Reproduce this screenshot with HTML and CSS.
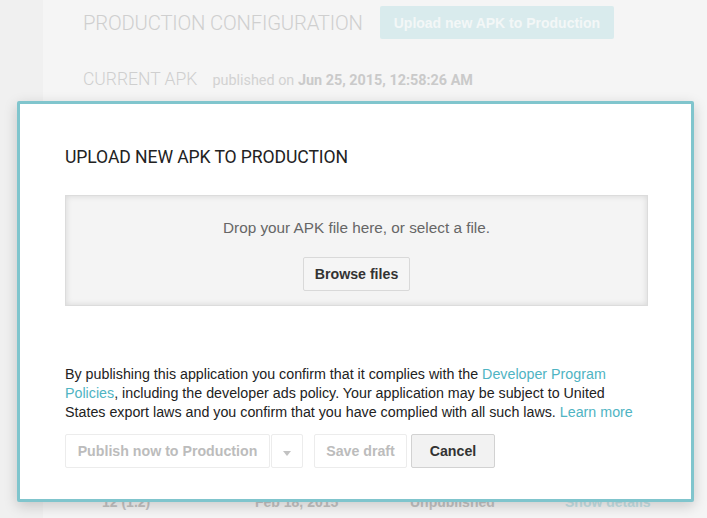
FILE: index.html
```html
<!DOCTYPE html>
<html lang="en">
<head>
    <meta charset="UTF-8">
    <title>Upload new APK</title>
    <link rel="stylesheet" href="styles.css">
</head>
<body>
    <div class="page">
        <div class="panel">
            <div class="config-head">
                <h1 class="config-title">PRODUCTION CONFIGURATION</h1>
                <button class="btn-upload">Upload new APK to Production</button>
            </div>
            <div class="current">
                <span class="current-title">CURRENT APK</span>
                <span class="current-meta">published on <b>Jun 25, 2015, 12:58:26 AM</b></span>
            </div>
            <div class="spacer"></div>
            <div class="apk-row">
                <span class="c1">12 (1.2)</span>
                <span class="c2">Feb 18, 2015</span>
                <span class="c3">Unpublished</span>
                <span class="c4">Show details</span>
            </div>
        </div>
    </div>

    <!-- dialog sits over the page -->
    <div class="dialog">
        <h2 class="dialog-title">UPLOAD NEW APK TO PRODUCTION</h2>
        <div class="dropzone">
            <p class="drop-text">Drop your APK file here, or select a file.</p>
            <button class="btn">Browse files</button>
        </div>
        <p class="terms">By publishing this application you confirm that it complies with the <a href="#">Developer Program Policies</a>, including the developer ads policy. Your application may be subject to United States export laws and you confirm that you have complied with all such laws. <a href="#">Learn more</a></p>
        <div class="actions">
            <button class="btn btn-off btn-publish">Publish now to Production</button>
            <button class="btn btn-off btn-drop"><span class="caret"></span></button>
            <button class="btn btn-off btn-draft">Save draft</button>
            <button class="btn btn-cancel">Cancel</button>
        </div>
    </div>
</body>
</html>
```

FILE: styles.css
```css
html, body {
    margin: 0;
    padding: 0;
}
body {
    width: 707px;
    height: 518px;
    overflow: hidden;
    background: #f0f0f0;
    font-family: "Liberation Sans", Arial, sans-serif;
    position: relative;
}
button {
    font-family: "Liberation Sans", Arial, sans-serif;
}

/*背景页面*/
.page {
    display: flex;
    height: 518px;
}
.panel {
    margin-left: 43px;
    flex: 1;
    background: #f5f5f5;
    padding-left: 40px;
    display: flex;
    flex-direction: column;
}
.config-head {
    display: flex;
    align-items: center;
    height: 33px;
    margin-top: 6px;
}
.config-title {
    margin: 0;
    font-family: Roboto, sans-serif;
    font-weight: 300;
    font-size: 20.3px;
    color: #cfcfcf;
    letter-spacing: -0.2px;
}
.btn-upload {
    margin-left: 17px;
    height: 33px;
    padding: 0 14px;
    border: 0;
    border-radius: 2px;
    background: #d9ebed;
    color: #f3f7f7;
    font-weight: bold;
    font-size: 14px;
}
.current {
    margin-top: 30px;
    display: flex;
    align-items: baseline;
}
.current-title {
    font-family: Roboto, sans-serif;
    font-weight: 300;
    font-size: 17.5px;
    color: #cfcfcf;
}
.current-meta {
    margin-left: 15px;
    font-family: Roboto, sans-serif;
    font-size: 14.4px;
    color: #d2d2d2;
}
.current-meta b {
    color: #cacaca;
}
.spacer {
    flex: 1;
}
.apk-row {
    display: flex;
    height: 24px;
    padding-left: 19px;
    font-size: 14px;
    font-weight: bold;
    color: #c4c4c4;
}
.apk-row span {
    display: block;
}
.c1 { width: 153px; }
.c2 { width: 155px; }
.c3 { width: 155px; }
.c4 { color: #c6e2e6; }

/*对话框*/
.dialog {
    position: absolute;
    left: 17px;
    top: 101px;
    width: 677px;
    height: 401px;
    box-sizing: border-box;
    background: #fff;
    border: 3px solid #80c5cd;
    border-radius: 2px;
    box-shadow: 0 4px 14px rgba(0, 0, 0, 0.18);
    padding: 0 43px 0 45px;
}
.dialog-title {
    margin: 43px 0 0;
    font-family: Roboto, sans-serif;
    font-weight: 400;
    font-size: 17.6px;
    line-height: 20px;
    letter-spacing: -0.1px;
    color: #222;
}
.dropzone {
    margin-top: 28px;
    height: 111px;
    box-sizing: border-box;
    background: #f4f4f4;
    border: 1px solid #dcdcdc;
    box-shadow: inset 0 0 6px rgba(0, 0, 0, 0.12);
    text-align: center;
    padding-top: 23px;
}
.drop-text {
    margin: 0 0 20px;
    font-size: 15.3px;
    line-height: 18px;
    color: #666;
}
.btn {
    height: 34px;
    box-sizing: border-box;
    padding: 0 11px;
    background: #f5f5f5;
    border: 1px solid #d9d9d9;
    border-radius: 2px;
    font-size: 14.2px;
    font-weight: bold;
    color: #333;
}
.terms {
    margin: 59px 0 0;
    font-size: 14.27px;
    line-height: 19px;
    color: #222;
}
.terms a {
    color: #4fb4c3;
    text-decoration: none;
}
.actions {
    margin-top: 12px;
    display: flex;
}
.btn-off {
    background: #fff;
    border-color: #ececec;
    color: #bcbcbc;
}
.btn-publish {
    width: 205px;
}
.btn-drop {
    width: 32px;
    margin-left: 1px;
}
.caret {
    display: inline-block;
    margin-top: 5px;
    border-left: 4px solid transparent;
    border-right: 4px solid transparent;
    border-top: 5px solid #c2c2c2;
}
.btn-draft {
    width: 93px;
    margin-left: 11px;
}
.btn-cancel {
    width: 84px;
    margin-left: 4px;
    background: #f2f2f2;
    border-color: #d2d2d2;
}
```
